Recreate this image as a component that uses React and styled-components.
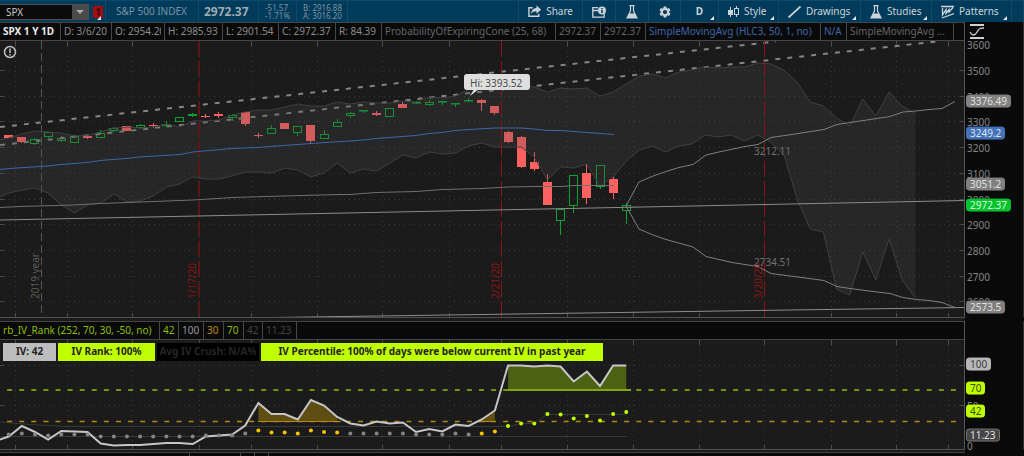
import styled, { createGlobalStyle } from "styled-components";
import { MdSettings } from "react-icons/md";

const GlobalStyle = createGlobalStyle`
  * {
    box-sizing: border-box;
  }
  body {
    margin: 0;
    background-color: #0a0a0a;
    font-family: "Noto Sans", "Open Sans", sans-serif;
    font-size: 10px;
    line-height: 17px;
    overflow-x: hidden;
  }
  button, input {
    font: inherit;
  }
`;

const Toolbar = styled.header`
  display: flex;
  height: 22px;
  background-color: #003b5c;
  border-top: 1px solid #0b4a6c;
  white-space: nowrap;
  overflow: hidden;
`;

const SymbolBox = styled.div`
  display: flex;
  width: 89px;
  height: 16px;
  margin-top: 3px;
  flex: none;
  background-color: #0b0b0b;
  border: 1px solid #4e4e4e;
  border-left: 0;
`;

const SymbolInput = styled.input`
  flex: 1;
  min-width: 0;
  padding: 0 6px;
  border: 0;
  background: none;
  color: #c8c8c8;
  outline: none;
`;

const ArrowBtn = styled.button`
  display: flex;
  align-items: center;
  justify-content: center;
  width: 16px;
  padding: 0;
  border: 0;
  background-color: #4a4a4a;
`;

const Segment = styled.div`
  display: flex;
  align-items: center;
  flex: ${(props) => (props.$grow ? "1 0 0" : "none")};
  width: ${(props) => (props.$width ? `${props.$width}px` : "auto")};
  padding-left: ${(props) => props.$pad || 0}px;
  border-right: 1px solid #12496a;
  color: #7f929d;
`;

const AlertBtn = styled.button`
  position: relative;
  width: 17px;
  flex: none;
  padding: 0 0 0 4px;
  border: 0;
  border-right: 1px solid #12496a;
  background: none;
`;

const AlertMark = styled.span`
  display: block;
  width: 10px;
  background-color: #a30d10;
  border-radius: 1px;
  color: #3d0a12;
  font-weight: 700;
  line-height: 12px;
  text-align: center;
`;

const Last = styled.strong`
  color: #9eaab0;
  font-size: 12px;
`;

const Quote = styled.div`
  font-size: 8px;
  line-height: 8px;
`;

const ToolBtn = styled.button`
  position: relative;
  display: flex;
  align-items: center;
  justify-content: ${(props) => (props.$center ? "center" : "flex-start")};
  gap: 5px;
  flex: none;
  width: ${(props) => props.$width}px;
  padding: 0 ${(props) => (props.$center ? 0 : 9)}px;
  border: 0;
  border-right: 1px solid #12496a;
  background: none;
  color: #ccd3d6;
`;

const Corner = styled.i`
  position: absolute;
  right: 4px;
  bottom: 2px;
  border-left: 4px solid transparent;
  border-bottom: 4px solid #e8e8e8;
`;

const Pane = styled.section`
  display: grid;
  grid-template-columns: minmax(0, 1fr) 59px;
`;

const Plot = styled.div`
  background-color: #1b1b1b;
  border-right: 1px solid #555;
`;

const Legend = styled.div`
  display: flex;
  height: 19px;
  background-color: #0a0a0a;
  border-top: 1px solid #454545;
  border-bottom: 1px solid #454545;
  overflow: hidden;
`;

const LegendCell = styled.div`
  flex: none;
  width: ${(props) => props.$width}px;
  padding: 0 3px;
  border-right: 1px solid #484848;
  color: ${(props) => props.$color || "#8c8c8c"};
  font-weight: ${(props) => (props.$bold ? 700 : 400)};
`;

const Clip = styled.div`
  overflow: hidden;
  white-space: nowrap;
`;

const Canvas = styled.div`
  position: relative;
`;

const ChartSvg = styled.svg`
  display: block;
  width: 100%;
  height: auto;
  font-size: 10px;
`;

const Axis = styled.div`
  display: flex;
  flex-direction: column;
  border-right: 1px solid #333;
`;

const AxisHead = styled.div`
  height: 19px;
  padding: 2px 0 0 4px;
`;

const Scale = styled.div`
  position: relative;
  flex: 1;
`;

const Tick = styled.span`
  position: absolute;
  left: 2px;
  line-height: 14px;
  color: #858585;
  transform: translateY(-50%);
`;

const Tag = styled.span`
  position: absolute;
  left: 1px;
  padding: 0 3px;
  border: 1px solid ${(props) => props.$edge || props.$bg};
  border-radius: 3px;
  line-height: 11px;
  background-color: ${(props) => props.$bg};
  color: ${(props) => props.$color};
  transform: translateY(-65%);
`;

const Divider = styled.div`
  height: ${(props) => props.$height}px;
  margin-right: 59px;
  background-color: #1b1b1b;
  border-top: 1px solid #505050;
`;

const Labels = styled.div`
  position: absolute;
  top: 3px;
  left: 3px;
  display: flex;
  gap: 2px;
`;

const Label = styled.div`
  width: ${(props) => props.$width}px;
  height: 18px;
  text-align: center;
  font-weight: 700;
  white-space: nowrap;
  background-color: ${(props) => props.$bg};
  color: ${(props) => props.$color || "#242424"};
`;

const NextLegend = styled(Legend)`
  height: 4px;
  margin-right: 59px;
  border-bottom: 0;
`;

const NextCell = styled.div`
  width: ${(props) => props.$width}px;
  border-right: 1px solid #484848;
`;

const barX = (i) => 8.7 + 13.14 * i;
const line = (values, first = 0) =>
  values.map((y, i) => `${barX(i + first).toFixed(1)},${y}`).join(" ");

const gridX = [15, 67, 132, 199, 251, 317, 382, 449, 501, 567, 633, 699, 764, 831, 896, 948];
const prices = [3600, 3500, 3400, 3300, 3200, 3100, 3000, 2900, 2800, 2700, 2600];
const priceY = (p) => 70.5 + (3500 - p) * 0.257;
const priceTop = (p) => `${((priceY(p) - 40.5) / 276) * 100}%`;
const rankTop = (y) => `${((y - 340) / 109) * 100}%`;

// [up, body top, body bottom, high, low]
const candles = [
  [0, 135, 138, 135, 138], [0, 137, 142, 137, 143], [1, 139, 144, 138, 145],
  [1, 132, 137, 132, 138], [1, 138, 141, 136, 142], [1, 136, 143, 135, 143],
  [0, 136, 138, 135, 139], [1, 133, 138, 130, 138], [1, 128, 131, 127, 132],
  [0, 126, 131, 126, 131], [1, 125, 128, 124, 129], [0, 125, 126, 123, 128],
  [1, 124, 126, 121, 127], [1, 117, 122, 117, 122], [1, 114, 116, 113, 117],
  [0, 116, 117, 114, 118], [0, 114, 116, 112, 118], [1, 115, 118, 114, 121],
  [0, 112, 124, 112, 126], [0, 135, 136, 133, 138], [1, 128, 134, 125, 134],
  [0, 123, 129, 123, 129], [1, 126, 133, 126, 136], [0, 125, 141, 125, 143],
  [1, 134, 139, 130, 139], [1, 122, 127, 119, 127], [1, 113, 116, 112, 118],
  [1, 110, 111, 110, 113], [0, 113, 115, 111, 116], [1, 108, 117, 108, 117],
  [0, 104, 108, 102, 108], [1, 102, 103, 101, 104], [1, 102, 105, 100, 106],
  [1, 101, 102, 101, 105], [1, 103, 104, 103, 107], [1, 100, 101, 98, 102],
  [0, 100, 103, 99, 111], [0, 106, 113, 106, 115], [0, 132, 142, 131, 143],
  [0, 137, 167, 136, 168], [0, 162, 169, 152, 171], [0, 182, 205, 174, 205],
  [1, 209, 221, 209, 235], [1, 175, 206, 175, 213], [0, 173, 198, 164, 204],
  [1, 165, 187, 165, 189], [0, 179, 193, 177, 199], [1, 205, 211, 203, 224],
];

const cloudTop = [
  141, 138, 134, 131, 132, 133, 136, 135, 132, 128, 127, 128, 127, 124, 127, 121, 121, 120,
  115, 112, 110, 110, 107, 104, 106, 106, 102, 104, 102, 103, 103, 101, 102, 97, 98, 96, 89,
  85, 84, 86, 84, 87, 92, 88, 89, 88, 96, 92, 84, 76, 74, 78, 72, 70, 67, 68, 67, 67, 63, 64,
  70, 82, 102, 106, 118, 126, 99, 116, 92, 106, 114,
];
const cloudBottom = [
  199, 193, 190, 188, 193, 205, 213, 205, 203, 194, 202, 201, 196, 187, 184, 177, 179, 179,
  176, 172, 172, 173, 168, 170, 177, 173, 163, 173, 169, 171, 163, 155, 158, 152, 154, 153,
  146, 143, 147, 147, 147, 157, 180, 167, 168, 164, 186, 177, 161, 150, 146, 152, 146, 144,
  135, 137, 135, 141, 135, 142, 155, 199, 229, 232, 289, 295, 252, 280, 239, 280, 298,
];
const average50 =
  "0,169.5 9,168.5 48,166 61,164.5 74,163.5 87,162.5 100,160.5 126,158.5 139,157 180,154.5 193,152 232,148.5 257,147.5 284,145.5 311,143.5 340,141.5 350,141 363,140 376,138.5 389,137.5 416,135.5 429,133.5 442,132.5 455,130.5 469,129.5 495,128 521,128 534,129 547,130.5 561,130.5 587,132.5 614,134.5";
const average200 =
  "0,207.5 20,206.5 73,205 100,203.5 127,202.5 167,201 193,200 233,197.5 283,196 340,194.5 350,194.5 376,192.5 416,191.5 442,189.5 482,188.5 508,187 534,186.5 561,186.5 574,185.5 614,185.5";
const coneUpper =
  "626,206 639,182 653,176 666,171.5 679,167.5 693,164.5 706,155 719,152 745,146.5 758,144.5 771,137.5 785,135.5 824,129.5 837,124.5 850,122.5 890,116.5 903,112 916,111 929,109.5 942,108.5 955,101.5";
const coneLower =
  "626,206 639,229 653,235 666,239.5 693,247 706,256.5 732,262.5 758,266.5 771,273.5 798,277 824,280.5 837,286.5 850,288.5 877,292 890,293.5 903,297.5 916,299.5 929,300.5 942,302.5 955,307.5";

const ivRank = [
  441, 436.5, 426, 432, 439.5, 431, 431.5, 432, 443.5, 445.5, 445, 445, 444, 443, 443, 444,
  436.5, 435.5, 434.5, 425.5, 403, 414, 414, 419.5, 400, 405.5, 417, 423.5, 425.5, 421.5,
  423.5, 422.5, 432, 429, 431.5, 424.5, 426, 419.5, 410.5, 365.5, 365.5, 366.5, 365.5, 366.5,
  381.5, 371.5, 386, 365.5, 365.5,
];
const ivDots = [
  434.5, 433.5, 434.5, 435.5, 434.5, 434.5, 434.5, 436.5, 436.5, 436.5, 436.5, 436.5, 436.5,
  436.5, 436.5, 435.5, 435.5, 435.5, 433.5, 430.5, 432.5, 432.5, 433.5, 430.5, 432, 432.5,
  433.5, 433.5, 433.5, 433.5, 433.5, 434.5, 434.5, 434.5, 433.5, 434.5, 433.5, 431.5, 426,
  423.5, 423.5, 414, 414.5, 418.5, 416, 420.5, 414, 412,
];
const dotColor = (i) => {
  if (i >= 38) return "#bfff00";
  if ((i >= 19 && i <= 25) || i >= 36) return "#ffc400";
  return "#858585";
};

const fillBetween = (from, to, base) =>
  `${barX(from)},${base} ${line(ivRank.slice(from + 1, to + 2), from)} ${barX(to)},${base}`;

function Grid({ top, bottom, rows }) {
  return (
    <g stroke="#383838" shapeRendering="crispEdges">
      {rows.map((y) => (
        <g key={y}>
          <path d={`M4 ${Math.round(y) + 0.5}H960`} strokeDasharray="1 4" />
          <path d={`M0 ${Math.round(y) + 0.5}h4M960 ${Math.round(y) + 0.5}h4`} stroke="#484848" />
        </g>
      ))}
      {gridX.map((x) => (
        <g key={x}>
          <path d={`M${x + 0.5} ${top}V${bottom}`} strokeDasharray="1 4" />
          <path d={`M${x + 0.5} ${top}v5M${x + 0.5} ${bottom - 4}v4`} stroke="#4c4c4c" />
        </g>
      ))}
    </g>
  );
}

function Candle({ index, data }) {
  const [up, top, bottom, high, low] = data;
  const x = Math.round(barX(index) - 0.5);
  const color = up ? "#0ba32f" : "#ff6060";
  return (
    <g stroke={color} fill="none">
      <path d={`M${x + 0.5} ${high}V${top}M${x + 0.5} ${bottom}V${low}`} />
      {up ? (
        <rect x={x - 3.5} y={top + 0.5} width="8" height={Math.max(bottom - top - 1, 0.5)} />
      ) : (
        <rect x={x - 4} y={top} width="9" height={bottom - top} fill={color} stroke="none" />
      )}
    </g>
  );
}

function PriceChart() {
  return (
    <ChartSvg viewBox="0 41 964 276" role="img" aria-label="SPX daily price">
      <Grid top={41} bottom={317} rows={prices.slice(1).map((p) => priceY(p) - 0.5)} />
      <path d="M41.5 41V317" stroke="#555" strokeDasharray="8 4" />
      {candles.map((data, i) => (
        <Candle key={i} index={i} data={data} />
      ))}
      <g stroke="#858585" strokeWidth="2" strokeDasharray="5 7">
        <path d="M0 127L776 41.5" />
        <path d="M0 145L937 41.5" />
      </g>
      <polygon
        points={`${line(cloudTop, -1)} ${line(cloudBottom, -1).split(" ").reverse().join(" ")}`}
        fill="#4b4b4b"
        fillOpacity="0.25"
      />
      <polyline points={line(cloudTop, -1)} fill="none" stroke="#404040" />
      <polyline points={line(cloudBottom, -1)} fill="none" stroke="#404040" />
      <path d="M199 41V317" stroke="#5e1515" strokeWidth="2" strokeDasharray="15 5" />
      <path d="M501.5 41V317M764.5 41V317" stroke="#8c1414" strokeDasharray="15 5" />
      <polyline points={average50} fill="none" stroke="#3c68a8" />
      <g fill="none" stroke="#808080">
        <polyline points={average200} stroke="#707070" />
        <polyline points={coneUpper} />
        <polyline points={coneLower} />
        <path d="M0 220L964 200.5M0 321.5L964 307.5" stroke="#8c8c8c" />
      </g>
      <text transform="translate(39 299) rotate(-90)" fill="#5c5c5c">2019 year</text>
      <g fill="#8c1515">
        <text transform="translate(196 299) rotate(-90)">1/17/20</text>
        <text transform="translate(499 299) rotate(-90)">2/21/20</text>
        <text transform="translate(762 299) rotate(-90)">3/20/20</text>
      </g>
      <text x="754" y="155" fill="#707070">3212.11</text>
      <text x="754" y="266" fill="#707070">2734.51</text>
      <path d="M474 89l-4 7 9-7z" fill="#dedede" />
      <rect x="464" y="74" width="66" height="16" rx="3" fill="#dedede" />
      <text x="470" y="87" fill="#4c4c4c">Hi: 3393.52</text>
      <circle cx="10" cy="52" r="5.5" fill="none" stroke="#c0c0c0" strokeWidth="1.5" />
      <path d="M10 48.5v4.5M10 54v1.5" stroke="#c0c0c0" strokeWidth="1.5" />
    </ChartSvg>
  );
}

function RankChart() {
  return (
    <ChartSvg viewBox="0 340 964 109" role="img" aria-label="IV rank">
      <Grid top={340} bottom={449} rows={[365, 405]} />
      <g fill="none" stroke="#383838">
        <polyline points="0,422 30,424.5 67,426.5 508,426.5 521,423.5 534,423.5 547,414.5 626,414.5" />
        <path d="M0 436.5H627" />
      </g>
      <path d="M-5 390H956" stroke="#72960a" strokeWidth="2" strokeDasharray="5 7.1" />
      <path d="M-5 421.5H956" stroke="#b58a10" strokeWidth="1.4" strokeDasharray="5 7.1" />
      <polygon points={fillBetween(19, 25, 421.5)} fill="#5f4d14" />
      <polygon points={fillBetween(36, 37, 421.5)} fill="#5f4d14" />
      <polygon points={fillBetween(38, 47, 390)} fill="#4c6114" />
      <path d="M258 421.5H341M482 421.5H495" stroke="#b58a10" />
      <path d="M508 390H631" stroke="#7fa80c" strokeWidth="2" />
      <polyline points={line(ivRank, -1)} fill="none" stroke="#c6c6c6" strokeWidth="2" />
      {ivDots.map((y, i) => (
        <circle key={i} cx={barX(i)} cy={y} r="2" fill={dotColor(i)} />
      ))}
    </ChartSvg>
  );
}

const ShareIcon = () => (
  <svg width="14" height="13" viewBox="0 0 14 13">
    <path d="M5 2.5H1v9h10.5V9" fill="none" stroke="#ccd3d6" strokeWidth="1.5" />
    <path d="M9 0l5 4.5-5 4.5V6.3C6.5 6.2 4.8 7 3.3 9 3.5 5.5 5.2 3 9 2.7z" fill="#ccd3d6" />
  </svg>
);

const NoteIcon = () => (
  <svg width="14" height="12" viewBox="0 0 14 12">
    <path d="M6 1.7H.8v9.5h11.4V8M.8 4.5H6" fill="none" stroke="#ccd3d6" strokeWidth="1.3" />
    <circle cx="10" cy="4.5" r="4" fill="#ccd3d6" />
    <path d="M10 2v1.2M10 4v3" stroke="#003b5c" strokeWidth="1.5" />
  </svg>
);

const FlaskIcon = () => (
  <svg width="12" height="14" viewBox="0 0 12 14">
    <path d="M3.5 .7h5M4.5 1v5L.9 13h10.2L7.5 6V1" fill="none" stroke="#ccd3d6" strokeWidth="1.2" />
    <path d="M3.3 8.500h5.4l2.3 4.500H1z" fill="#ccd3d6" />
  </svg>
);

const StyleIcon = () => (
  <svg width="11" height="12" viewBox="0 0 11 12">
    <path d="M2.5 1v10M8.500 0v11" stroke="#ccd3d6" />
    <rect x="0" y="4" width="5" height="5" fill="#ccd3d6" />
    <rect x="6.5" y="2.5" width="4" height="6" fill="#003b5c" stroke="#ccd3d6" />
  </svg>
);

const DrawIcon = () => (
  <svg width="13" height="12" viewBox="0 0 13 12">
    <path d="M.5 11.5L12.5 .5" stroke="#ccd3d6" strokeWidth="1.8" />
  </svg>
);

const PatternIcon = () => (
  <svg width="13" height="14" viewBox="0 0 13 14">
    <path
      d="M0 1.5h13M1 13L13 8.5M1.5 3v7L5 4.5v4L8 4.5v2.5L12 2.5"
      fill="none"
      stroke="#ccd3d6"
      strokeWidth="1.3"
    />
  </svg>
);

const ScaleIcon = () => (
  <svg width="16" height="15" viewBox="0 0 16 15">
    <path d="M1 1h14M1 14h14" stroke="#d0d0d0" strokeWidth="2" />
    <path d="M1 8c2 4 5 4 7 0s4-4 7-4" fill="none" stroke="#d0d0d0" strokeWidth="1.3" />
  </svg>
);

const priceLegend = [
  { text: "SPX 1 Y 1D", width: 61, color: "#e8e8e8", bold: true },
  { text: "D: 3/6/20", width: 51 },
  { text: "O: 2954.20", width: 53 },
  { text: "H: 2985.93", width: 58 },
  { text: "L: 2901.54", width: 56 },
  { text: "C: 2972.37", width: 57 },
  { text: "R: 84.39", width: 46 },
  { text: "ProbabilityOfExpiringCone (25, 68)", width: 174, color: "#666" },
  { text: "2972.37", width: 45, color: "#666" },
  { text: "2972.37", width: 45, color: "#666" },
  { text: "SimpleMovingAvg (HLC3, 50, 1, no)", width: 175, color: "#3c68a8" },
  { text: "N/A", width: 26, color: "#3c68a8" },
  { text: "SimpleMovingAvg ...", width: 107, color: "#666" },
];

const rankLegend = [
  { text: "rb_IV_Rank (252, 70, 30, -50, no)", width: 160, color: "#8fbe0a" },
  { text: "42", width: 19, color: "#8fbe0a" },
  { text: "100", width: 25, color: "#999" },
  { text: "30", width: 20, color: "#bd8a10" },
  { text: "70", width: 20, color: "#8fbe0a" },
  { text: "42", width: 19, color: "#444" },
  { text: "11.23", width: 34, color: "#444" },
];

const priceTags = [
  { value: 3376.49, text: "3376.49", bg: "#808080", color: "#e0e0e0" },
  { value: 3249.2, text: "3249.2", bg: "#4472b8", color: "#dbe4f2" },
  { value: 3051.2, text: "3051.2", bg: "#808080", color: "#e0e0e0" },
  { value: 2972.37, text: "2972.37", bg: "#06c22d", color: "#d6ffe0" },
  { value: 2573.5, text: "2573.5", bg: "#808080", color: "#e0e0e0" },
];

const rankTags = [
  { y: 366, text: "100", bg: "#b8b8b8", color: "#3c3c3c" },
  { y: 390, text: "70", bg: "#bfff00", color: "#3c4c00" },
  { y: 413, text: "42", bg: "#bfff00", color: "#3c4c00" },
  { y: 437, text: "11.23", bg: "#454545", edge: "#777", color: "#e0e0e0" },
];

function LegendRow({ cells }) {
  return (
    <Legend>
      {cells.map((cell, i) => (
        <LegendCell key={i} $width={cell.width} $color={cell.color} $bold={cell.bold}>
          <Clip>{cell.text}</Clip>
        </LegendCell>
      ))}
    </Legend>
  );
}

function App() {
  return (
    <>
      <GlobalStyle />
      <Toolbar>
        <SymbolBox>
          <SymbolInput aria-label="Symbol" defaultValue="SPX" />
          <ArrowBtn aria-label="Recent symbols">
            <svg width="8" height="4" viewBox="0 0 8 4">
              <path d="M0 0h8L4 4z" fill="#a8a8a8" />
            </svg>
          </ArrowBtn>
        </SymbolBox>
        <AlertBtn aria-label="Linked group 1">
          <AlertMark>1</AlertMark>
          <Corner />
        </AlertBtn>
        <Segment $width={93} $pad={10}>S&amp;P 500 INDEX</Segment>
        <Segment $width={60} $pad={5}>
          <Last>2972.37</Last>
        </Segment>
        <Segment $width={38} $pad={6}>
          <Quote>
            <div>-51.57</div>
            <div>-1.71%</div>
          </Quote>
        </Segment>
        <Segment $width={51} $pad={6}>
          <Quote>
            <div>B: 2916.88</div>
            <div>A: 3016.20</div>
          </Quote>
        </Segment>
        <Segment $grow />
        <ToolBtn $width={64}><ShareIcon />Share</ToolBtn>
        <ToolBtn $width={33} $center aria-label="Notes"><NoteIcon /></ToolBtn>
        <ToolBtn $width={33} $center aria-label="Lab"><FlaskIcon /></ToolBtn>
        <ToolBtn $width={32} $center aria-label="Settings"><MdSettings size={14} /></ToolBtn>
        <ToolBtn $width={38} $center><b>D</b><Corner /></ToolBtn>
        <ToolBtn $width={60}><StyleIcon />Style<Corner /></ToolBtn>
        <ToolBtn $width={82}><DrawIcon />Drawings<Corner /></ToolBtn>
        <ToolBtn $width={71}><FlaskIcon />Studies<Corner /></ToolBtn>
        <ToolBtn $width={80}><PatternIcon />Patterns<Corner /></ToolBtn>
        <Segment $width={12} />
      </Toolbar>

      <Pane>
        <Plot>
          <LegendRow cells={priceLegend} />
          <PriceChart />
        </Plot>
        <Axis>
          <AxisHead><ScaleIcon /></AxisHead>
          <Scale>
            {prices.map((p) => (
              <Tick key={p} style={{ top: priceTop(p) }}>{p}</Tick>
            ))}
            {priceTags.map((tag) => (
              <Tag key={tag.text} $bg={tag.bg} $color={tag.color} style={{ top: priceTop(tag.value) }}>
                {tag.text}
              </Tag>
            ))}
          </Scale>
        </Axis>
      </Pane>
      <Divider $height={4} />

      <Pane>
        <Plot>
          <LegendRow cells={rankLegend} />
          <Canvas>
            <RankChart />
            <Labels>
              <Label $width={53} $bg="#bdbdbd">IV: 42</Label>
              <Label $width={97} $bg="#bfff00">IV Rank: 100%</Label>
              <Label $width={102} $bg="#000" $color="#262626">Avg IV Crush: N/A%</Label>
              <Label $width={342} $bg="#bfff00">
                IV Percentile: 100% of days were below current IV in past year
              </Label>
            </Labels>
          </Canvas>
        </Plot>
        <Axis>
          <AxisHead />
          <Scale>
            <Tick style={{ top: rankTop(406) }}>50</Tick>
            <Tick style={{ top: rankTop(446) }}>0</Tick>
            {rankTags.map((tag) => (
              <Tag key={tag.text} $bg={tag.bg} $edge={tag.edge} $color={tag.color} style={{ top: rankTop(tag.y) }}>
                {tag.text}
              </Tag>
            ))}
          </Scale>
        </Axis>
      </Pane>
      <Divider $height={3} />
      <NextLegend>
        <NextCell $width={190} />
        <NextCell $width={51} />
        <NextCell $width={14} />
        <NextCell $width={14} />
      </NextLegend>
    </>
  );
}

export default App;
